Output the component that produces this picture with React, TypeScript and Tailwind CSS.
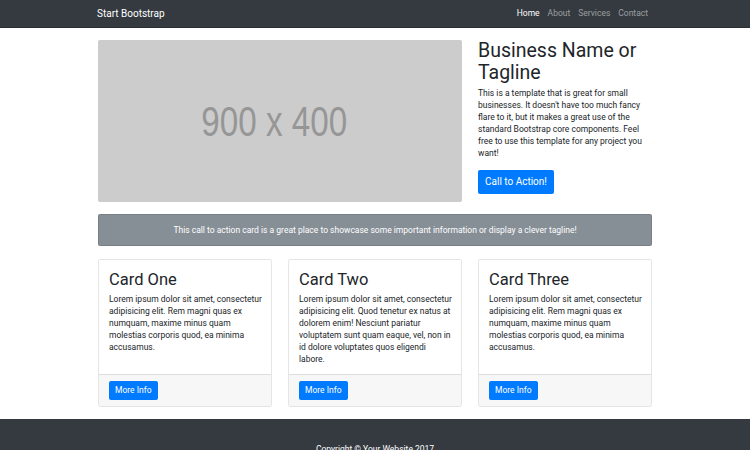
export default function App() {
  const cards = [
    {
      title: 'Card One',
      text: 'Lorem ipsum dolor sit amet, consectetur adipisicing elit. Rem magni quas ex numquam, maxime minus quam molestias corporis quod, ea minima accusamus.',
    },
    {
      title: 'Card Two',
      text: 'Lorem ipsum dolor sit amet, consectetur adipisicing elit. Quod tenetur ex natus at dolorem enim! Nesciunt pariatur voluptatem sunt quam eaque, vel, non in id dolore voluptates quos eligendi labore.',
    },
    {
      title: 'Card Three',
      text: 'Lorem ipsum dolor sit amet, consectetur adipisicing elit. Rem magni quas ex numquam, maxime minus quam molestias corporis quod, ea minima accusamus.',
    },
  ];

  return (
    <div className="min-h-screen bg-white text-[#212529] font-['Roboto','Liberation_Sans',sans-serif]">
      <nav className="h-[28px] bg-[#343a40] border-b border-[#2b3035]">
        <div className="w-[554px] mx-auto h-full flex items-center justify-between">
          <a className="text-white text-[10px] -ml-px">Start Bootstrap</a>
          <ul className="flex text-[8.5px]">
            <li className="px-1 text-white">Home</li>
            <li className="px-1 text-white/50">About</li>
            <li className="px-1 text-white/50">Services</li>
            <li className="px-1 text-white/50">Contact</li>
          </ul>
        </div>
      </nav>

      <main className="w-[554px] mx-auto pt-[12px]">
        <div className="flex gap-4">
          <div className="w-[364px] h-[162px] shrink-0 bg-[#cccccc] rounded-[2px] flex items-center justify-center pr-[11px] overflow-hidden">
            <span className="font-['Liberation_Sans',sans-serif] text-[42px] text-[#969696] scale-x-[0.79] whitespace-nowrap">
              900 x 400
            </span>
          </div>
          <div className="w-[174px]">
            <h1 className="text-[19.5px] leading-[22px] mb-[3px] text-[#212529]">Business Name or Tagline</h1>
            <p className="text-[8.5px] leading-[12px] mb-[9px]">
              This is a template that is great for small businesses. It doesn't have too much fancy flare to it, but it makes a great use of the standard Bootstrap core components. Feel free to use this template for any project you want!
            </p>
            <button className="h-[24px] px-[7px] bg-[#007bff] text-white text-[10px] rounded-[2px]">Call to Action!</button>
          </div>
        </div>

        <div className="mt-[12px] h-[32px] bg-[#868e96] border border-black/10 rounded-[2px] flex items-center justify-center text-white text-[8.5px]">
          This call to action card is a great place to showcase some important information or display a clever tagline!
        </div>

        <div className="mt-[13px] flex gap-4">
          {cards.map((c) => (
            <div key={c.title} className="w-[174px] border border-black/10 rounded-[2px] flex flex-col overflow-hidden">
              <div className="flex-1 px-[9px] pt-[10px] pb-[9px]">
                <h2 className="text-[16.5px] leading-[19px] mb-[4px] pl-px">{c.title}</h2>
                <p className="text-[8.5px] leading-[12px] pl-px">{c.text}</p>
              </div>
              <div className="bg-[#f7f7f7] border-t border-black/10 px-[10px] py-[6px] flex items-center">
                <button className="h-[19px] px-[6px] bg-[#007bff] text-white text-[8.5px] leading-none rounded-[2px]">More Info</button>
              </div>
            </div>
          ))}
        </div>
      </main>

      <footer className="mt-[12px] bg-[#343a40] pt-[24px] pb-[24px] text-center text-white text-[8.5px] leading-[12px]">
        Copyright © Your Website 2017
      </footer>
    </div>
  );
}
